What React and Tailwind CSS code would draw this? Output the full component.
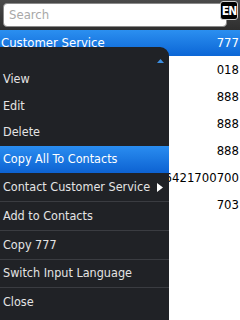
const rows = ["018", "888", "888", "888", "6421700700", "703"];

const items = [
  { label: "View", h: "h-[27px]", sep: false },
  { label: "Edit", h: "h-[26px]", sep: false },
  { label: "Delete", h: "h-[27px]", sep: false },
  { label: "Copy All To Contacts", h: "h-[27px]", sep: false, active: true },
  { label: "Contact Customer Service", h: "h-[28px]", sep: false, sub: true },
  { label: "Add to Contacts", h: "h-[29px]", sep: true },
  { label: "Copy 777", h: "h-[29px]", sep: true },
  { label: "Switch Input Language", h: "h-[28px]", sep: true },
  { label: "Close", h: "h-[29px]", sep: true },
];

function App() {
  return (
    <div className="relative w-[240px] h-[320px] overflow-hidden bg-white font-['DejaVu_Sans_Condensed','DejaVu_Sans',sans-serif]">
      {/* search bar */}
      <div className="relative h-[30px] bg-gradient-to-b from-[#4a4a4a] to-[#2e2e2e] px-[3px] pt-[3px]">
        <div className="h-[24px] w-[224px] rounded-[4px] border border-[#8a8a8a] bg-white px-[5px] flex items-center text-[13px] text-[#a8a8a8]">
          Search
        </div>
        <div className="absolute right-[2px] top-[1px] w-[18px] h-[19px] rounded-[3px] border border-[#cfcfcf] bg-black flex items-center justify-center text-[12px] font-bold text-white tracking-[-1px]">
          EN
        </div>
      </div>

      {/* list */}
      <div className="h-[26px] bg-gradient-to-b from-[#2b8ff0] to-[#0b66d6] flex items-center justify-between pl-[1px] pr-[1px] text-[13px] text-white">
        <span>Customer Service</span>
        <span>777</span>
      </div>
      {rows.map((n, i) => (
        <div key={i} className="h-[27px] flex items-center justify-end pr-[1px] text-[13px] text-black">
          {n}
        </div>
      ))}

      {/* context menu */}
      <div className="absolute left-0 top-[47px] bottom-0 w-[169px] rounded-tr-[9px] bg-[#202226] text-[12.5px] text-[#e4e4e4]">
        <div className="h-[19px] flex items-end justify-end pr-[5px] pb-[3px]">
          <svg width="7" height="4" viewBox="0 0 7 4">
            <polygon points="0,4 7,4 3.5,0" fill="#3d8fe0" />
          </svg>
        </div>
        {items.map((it) => (
          <div
            key={it.label}
            className={`${it.h} flex items-center justify-between whitespace-nowrap pl-[3px] pr-[6px] ${
              it.sep ? "border-t border-[#3a3c41]" : ""
            } ${
              it.active
                ? "bg-gradient-to-b from-[#2a8df0] to-[#0d62d2] text-white"
                : ""
            }`}
          >
            <span>{it.label}</span>
            {it.sub && (
              <svg width="6" height="9" viewBox="0 0 6 9">
                <polygon points="0,0 6,4.5 0,9" fill="#ffffff" />
              </svg>
            )}
          </div>
        ))}
      </div>
    </div>
  );
}

export default App;
